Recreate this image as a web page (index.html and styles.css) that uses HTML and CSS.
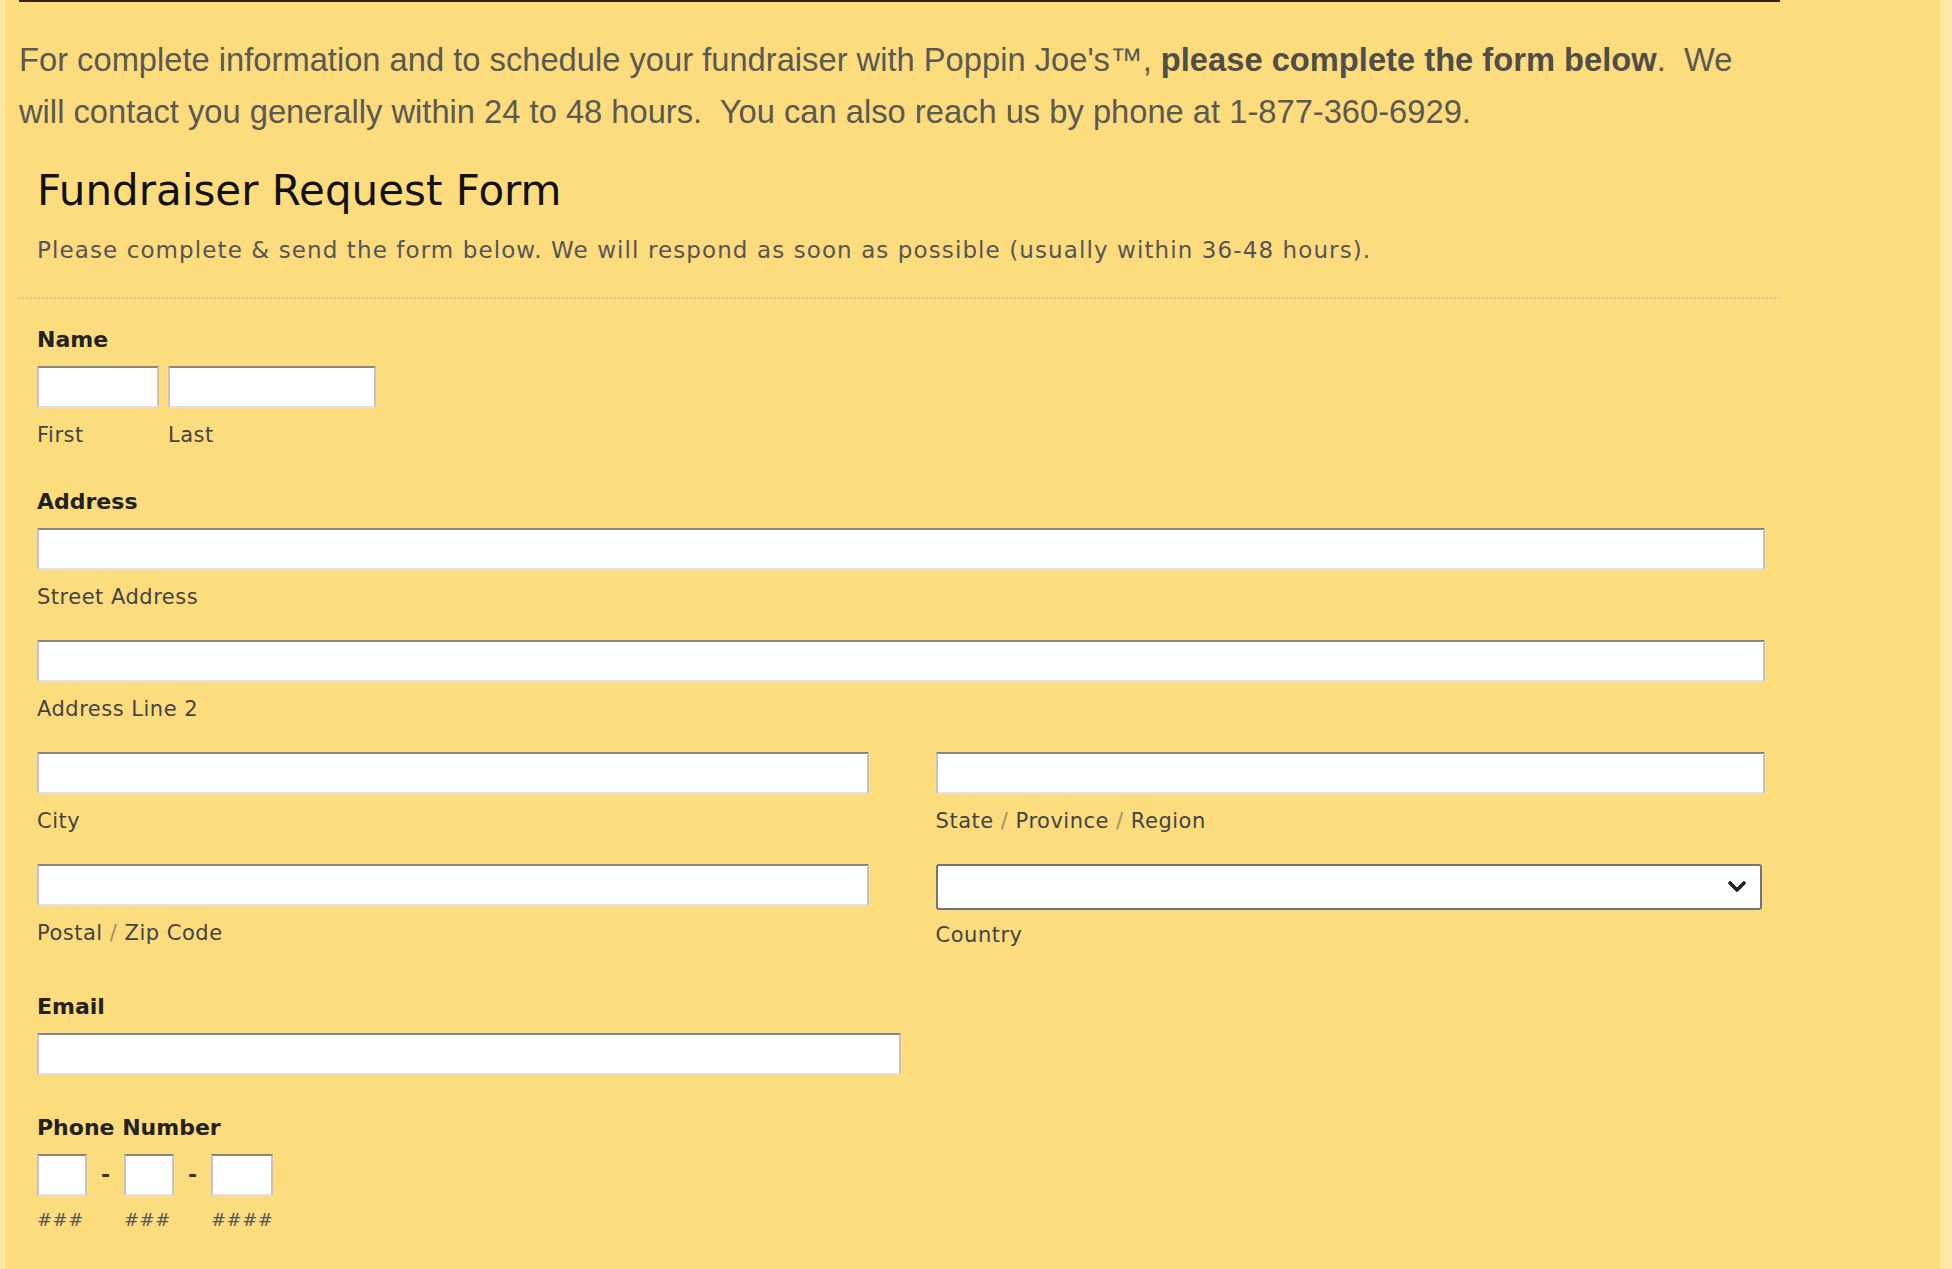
FILE: index.html
```html
<!DOCTYPE html>
<html lang="en">
<head>
  <meta charset="UTF-8" />
  <meta name="viewport" content="width=device-width, initial-scale=1" />
  <title>Fundraiser Request Form</title>
  <link rel="stylesheet" href="styles.css">
</head>
<body>

  <div class="page">
    <div class="content">

      <!-- Intro text -->
      <p class="intro">For complete information and to schedule your fundraiser with Poppin Joe's™, <strong>please complete the form below</strong>.&nbsp; We will contact you generally within 24 to 48 hours.&nbsp; You can also reach us by phone at 1-877-360-6929.</p>

      <!-- Request form -->
      <form class="request-form">
        <header class="form-head">
          <h2>Fundraiser Request Form</h2>
          <div class="form-desc">Please complete &amp; send the form below. We will respond as soon as possible (usually within 36-48 hours).</div>
        </header>

        <ul class="fields">
          <li class="field">
            <label class="desc">Name</label>
            <div class="name-row">
              <span class="part">
                <input type="text" class="text first">
                <label class="sub">First</label>
              </span>
              <span class="part">
                <input type="text" class="text last">
                <label class="sub">Last</label>
              </span>
            </div>
          </li>

          <li class="field address">
            <label class="desc">Address</label>
            <div class="addr-row">
              <div class="full">
                <input type="text" class="text">
                <label class="sub">Street Address</label>
              </div>
            </div>
            <div class="addr-row">
              <div class="full">
                <input type="text" class="text">
                <label class="sub">Address Line 2</label>
              </div>
            </div>
            <div class="addr-row">
              <div class="half left">
                <input type="text" class="text">
                <label class="sub">City</label>
              </div>
              <div class="half">
                <input type="text" class="text">
                <label class="sub">State <span class="sep">/</span> Province <span class="sep">/</span> Region</label>
              </div>
            </div>
            <div class="addr-row">
              <div class="half left">
                <input type="text" class="text">
                <label class="sub">Postal <span class="sep">/</span> Zip Code</label>
              </div>
              <div class="half">
                <div class="select-wrap">
                  <select class="select">
                    <option></option>
                    <option>United States</option>
                    <option>Canada</option>
                  </select>
                  <svg class="chevron" width="18" height="12" viewBox="0 0 18 12">
                    <path d="M2 2 L9 9 L16 2" fill="none" stroke="#222" stroke-width="3.6" stroke-linecap="round" stroke-linejoin="round"/>
                  </svg>
                </div>
                <label class="sub">Country</label>
              </div>
            </div>
          </li>

          <li class="field email">
            <label class="desc">Email</label>
            <input type="email" class="text medium">
          </li>

          <li class="field">
            <label class="desc">Phone Number</label>
            <div class="phone">
              <span class="part">
                <input type="tel" class="text p3">
                <label class="sub">###</label>
              </span>
              <span class="dash">-</span>
              <span class="part">
                <input type="tel" class="text p3">
                <label class="sub">###</label>
              </span>
              <span class="dash">-</span>
              <span class="part">
                <input type="tel" class="text p4">
                <label class="sub">####</label>
              </span>
            </div>
          </li>
        </ul>
      </form>

    </div>
  </div>

</body>
</html>
```

FILE: styles.css
```css
* {
  box-sizing: border-box;
}

body {
  margin: 0;
  background-color: #fde6a6;
}

.page {
  margin: 0 12px 0 5px;
  padding: 0 14px;
  min-height: 100vh;
  background-color: #fddc7e;
}

.content {
  width: 1761px;
  border-top: 2px solid #3b1f10;
}

/* Intro paragraph */
.intro {
  margin: 32px 0 0;
  font-family: "Liberation Sans", Arial, sans-serif;
  font-size: 32.7px;
  line-height: 52px;
  color: #5a5952;
}

.intro strong {
  color: #4f4e48;
}

/* Form header */
.form-head {
  margin-top: 28px;
  padding: 0 0 33px 18px;
  border-bottom: 2px dotted #d4c9a3;
  font-family: "DejaVu Sans", Verdana, sans-serif;
}

.form-head h2 {
  margin: 0;
  font-size: 42px;
  line-height: 50px;
  font-weight: normal;
  color: #111;
}

.form-desc {
  margin-top: 20px;
  font-size: 23px;
  line-height: 28px;
  letter-spacing: 1.1px;
  color: #555;
}

/* Fields */
.fields {
  list-style: none;
  margin: 28px 0 0;
  padding: 0 15px 0 18px;
  font-family: "DejaVu Sans", Verdana, sans-serif;
}

.field {
  margin-bottom: 42px;
}

.field.address {
  margin-bottom: 47px;
}

.field.email {
  margin-bottom: 40px;
}

.desc {
  display: block;
  margin-bottom: 13px;
  font-size: 22px;
  line-height: 26px;
  font-weight: bold;
  color: #222;
}

.sub {
  display: block;
  margin-top: 15px;
  font-size: 21px;
  line-height: 24px;
  letter-spacing: 0.5px;
  color: #444;
}

.sub .sep {
  color: #9c8e68;
}

.text {
  display: block;
  width: 100%;
  height: 42px;
  margin: 0;
  padding: 4px 6px;
  background-color: #fff;
  border-top: 2px solid #858585;
  border-left: 2px solid #c4c4c4;
  border-right: 2px solid #c4c4c4;
  border-bottom: 2px solid #e0e0e0;
  font-size: 20px;
}

/* Name */
.name-row {
  display: flex;
  gap: 9px;
}

.text.first {
  width: 122px;
}

.text.last {
  width: 208px;
}

/* Address */
.addr-row {
  display: flex;
  justify-content: space-between;
  margin-bottom: 31px;
}

.addr-row:last-child {
  margin-bottom: 0;
}

.full {
  width: 100%;
}

.half {
  width: 48%;
}

.half.left {
  width: 48.15%;
}

.select-wrap {
  position: relative;
}

.select-wrap + .sub {
  margin-top: 13px;
}

.select {
  display: block;
  width: calc(100% - 3px);
  height: 46px;
  padding: 0 40px 0 6px;
  background-color: #fff;
  border: 2px solid #747474;
  border-radius: 3px;
  font-size: 20px;
  -webkit-appearance: none;
  appearance: none;
}

.chevron {
  position: absolute;
  right: 19px;
  top: 17px;
}

/* Email */
.text.medium {
  width: 50%;
}

/* Phone */
.phone {
  display: flex;
}

.text.p3 {
  width: 50px;
}

.text.p4 {
  width: 62px;
}

.dash {
  width: 37px;
  height: 42px;
  line-height: 42px;
  text-align: center;
  font-size: 22px;
  font-weight: bold;
  color: #333;
}

.phone .sub {
  margin-top: 12px;
  font-size: 18px;
  color: #555;
}
```
